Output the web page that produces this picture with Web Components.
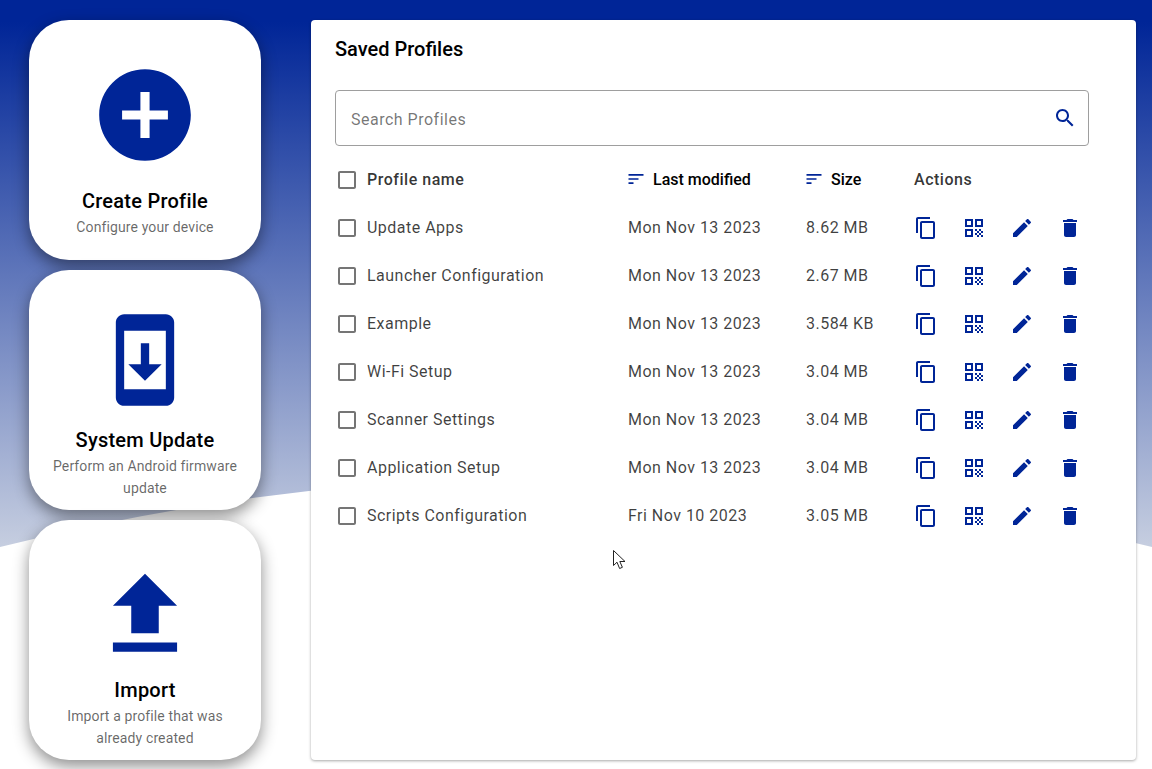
<!DOCTYPE html>
<html lang="en">
<head>
<meta charset="utf-8">
<title>Profiles</title>
<style>
  html, body { margin: 0; height: 100%; overflow: hidden; }
  body { font-family: Roboto, "Liberation Sans", sans-serif; }
</style>
</head>
<body>
<app-shell>
  <action-card slot="side" icon="add_circle" size="110" gap="19">
    <span slot="title">Create Profile</span>
    <span slot="sub">Configure your device</span>
  </action-card>
  <action-card slot="side" icon="system_update" size="100" gap="18">
    <span slot="title">System Update</span>
    <span slot="sub">Perform an Android firmware update</span>
  </action-card>
  <action-card slot="side" icon="file_upload" size="110" gap="8">
    <span slot="title">Import</span>
    <span slot="sub">Import a profile that was already created</span>
  </action-card>

  <profiles-panel>
    <profile-row>Update Apps<span slot="date">Mon Nov 13 2023</span><span slot="size">8.62 MB</span></profile-row>
    <profile-row>Launcher Configuration<span slot="date">Mon Nov 13 2023</span><span slot="size">2.67 MB</span></profile-row>
    <profile-row>Example<span slot="date">Mon Nov 13 2023</span><span slot="size">3.584 KB</span></profile-row>
    <profile-row>Wi-Fi Setup<span slot="date">Mon Nov 13 2023</span><span slot="size">3.04 MB</span></profile-row>
    <profile-row>Scanner Settings<span slot="date">Mon Nov 13 2023</span><span slot="size">3.04 MB</span></profile-row>
    <profile-row>Application Setup<span slot="date">Mon Nov 13 2023</span><span slot="size">3.04 MB</span></profile-row>
    <profile-row>Scripts Configuration<span slot="date">Fri Nov 10 2023</span><span slot="size">3.05 MB</span></profile-row>
  </profiles-panel>
</app-shell>

<script>
const ICONS = {
  add_circle: "M12 2C6.48 2 2 6.48 2 12s4.48 10 10 10 10-4.48 10-10S17.52 2 12 2zm5 11h-4v4h-2v-4H7v-2h4V7h2v4h4v2z",
  system_update: "M17 1.01L7 1c-1.1 0-2 .9-2 2v18c0 1.1.9 2 2 2h10c1.1 0 2-.9 2-2V3c0-1.1-.9-1.99-2-1.99zM17 19H7V5h10v14zm-1-6h-3V8h-2v5H8l4 4 4-4z",
  file_upload: "M9 16h6v-6h4l-7-7-7 7h4zm-4 2h14v2H5z",
  search: "M15.5 14h-.79l-.28-.27C15.41 12.59 16 11.11 16 9.5 16 5.91 13.09 3 9.5 3S3 5.91 3 9.5 5.91 16 9.5 16c1.61 0 3.09-.59 4.23-1.57l.27.28v.79l5 4.99L20.49 19l-4.99-5zm-6 0C7.01 14 5 11.99 5 9.5S7.01 5 9.5 5 14 7.01 14 9.5 11.99 14 9.5 14z",
  sort: "M3 18h6v-2H3v2zM3 6v2h18V6H3zm0 7h12v-2H3v2z",
  checkbox: "M19 5v14H5V5h14m0-2H5c-1.1 0-2 .9-2 2v14c0 1.1.9 2 2 2h14c1.1 0 2-.9 2-2V5c0-1.1-.9-2-2-2z",
  copy: "M16 1H4c-1.1 0-2 .9-2 2v14h2V3h12V1zm3 4H8c-1.1 0-2 .9-2 2v14c0 1.1.9 2 2 2h11c1.1 0 2-.9 2-2V7c0-1.1-.9-2-2-2zm0 16H8V7h11v14z",
  qr: "M3 11h8V3H3v8zm2-6h4v4H5V5zM3 21h8v-8H3v8zm2-6h4v4H5v-4zM13 3v8h8V3h-8zm6 6h-4V5h4v4zM19 19h2v2h-2zM13 13h2v2h-2zM15 15h2v2h-2zM13 17h2v2h-2zM15 19h2v2h-2zM17 17h2v2h-2zM17 13h2v2h-2zM19 15h2v2h-2z",
  edit: "M3 17.25V21h3.75L17.81 9.94l-3.75-3.75L3 17.25zM20.71 7.04c.39-.39.39-1.02 0-1.41l-2.34-2.34c-.39-.39-1.02-.39-1.41 0l-1.83 1.83 3.75 3.75 1.83-1.83z",
  trash: "M6 19c0 1.1.9 2 2 2h8c1.1 0 2-.9 2-2V7H6v12zM19 4h-3.5l-1-1h-5l-1 1H5v2h14V4z"
};

class AppIcon extends HTMLElement {
  constructor() {
    super();
    this.attachShadow({mode: "open"});
  }
  connectedCallback() {
    const size = this.getAttribute("size") || 24;
    const path = ICONS[this.getAttribute("name")];
    this.shadowRoot.innerHTML = `
      <style>
        :host { display: block; width: ${size}px; height: ${size}px; color: var(--icon-color, #002597); flex: none; }
        svg { display: block; width: 100%; height: 100%; fill: currentColor; }
      </style>
      <svg viewBox="0 0 24 24"><path d="${path}"/></svg>`;
  }
}
customElements.define("app-icon", AppIcon);

class AppShell extends HTMLElement {
  constructor() {
    super();
    this.attachShadow({mode: "open"}).innerHTML = `
      <style>
        :host { display: block; position: relative; width: 100%; height: 769px; overflow: hidden; background: #fff; }
        .wave { position: absolute; left: 0; top: 0; width: 100%; height: 100%; }
        .content { position: relative; display: flex; gap: 50px; height: 100%; box-sizing: border-box; padding: 20px 16px 9px 29px; }
        .side { display: flex; flex-direction: column; gap: 10px; width: 232px; flex: none; }
        .cursor { position: absolute; left: 613px; top: 550px; }
      </style>
      <svg class="wave" viewBox="0 0 1152 769" preserveAspectRatio="none">
        <defs>
          <linearGradient id="sky" gradientUnits="userSpaceOnUse" x1="0" y1="0" x2="0" y2="547">
            <stop offset="0" stop-color="#002597"/>
            <stop offset="0.04" stop-color="#002597"/>
            <stop offset="1" stop-color="#c6cee0"/>
          </linearGradient>
        </defs>
        <path d="M0 547 Q576 404 1152 547 V0 H0 Z" fill="url(#sky)"/>
      </svg>
      <div class="content">
        <div class="side"><slot name="side"></slot></div>
        <slot></slot>
      </div>
      <svg class="cursor" width="13" height="20" viewBox="0 0 13 20">
        <path d="M.5.5V15.5L4 12.2 6.6 18.5 9.4 17.3 6.8 11.5H12Z" fill="#fff" stroke="#222" stroke-width="1"/>
      </svg>`;
  }
}
customElements.define("app-shell", AppShell);

class ActionCard extends HTMLElement {
  constructor() {
    super();
    this.attachShadow({mode: "open"});
  }
  connectedCallback() {
    const gap = this.getAttribute("gap") || 18;
    this.shadowRoot.innerHTML = `
      <style>
        :host { display: flex; flex-direction: column; align-items: center; height: 240px; box-sizing: border-box; padding: 40px 16px 0; background: #fff; border-radius: 40px; box-shadow: 0 6px 16px rgba(0,0,0,.45); text-align: center; }
        .title { margin-top: ${gap}px; font-size: 20px; font-weight: 500; line-height: 24px; letter-spacing: .25px; color: #000; }
        .sub { margin-top: 3px; font-size: 14px; line-height: 22px; letter-spacing: .12px; color: rgba(0,0,0,.6); }
      </style>
      <app-icon name="${this.getAttribute("icon")}" size="${this.getAttribute("size")}"></app-icon>
      <div class="title"><slot name="title"></slot></div>
      <div class="sub"><slot name="sub"></slot></div>`;
  }
}
customElements.define("action-card", ActionCard);

class SearchField extends HTMLElement {
  constructor() {
    super();
    this.attachShadow({mode: "open"}).innerHTML = `
      <style>
        :host { display: flex; align-items: center; justify-content: space-between; height: 56px; box-sizing: border-box; padding: 0 11px 0 15px; border: 1px solid #9e9e9e; border-radius: 4px; }
        span { padding-top: 2px; font-size: 16px; letter-spacing: .5px; color: rgba(0,0,0,.55); }
      </style>
      <span>Search Profiles</span>
      <app-icon name="search"></app-icon>`;
  }
}
customElements.define("search-field", SearchField);

const ROW_STYLE = `
  :host { display: grid; grid-template-columns: 32px 261px 178px 108px 1fr; align-items: center; height: 48px; font-size: 16px; letter-spacing: .48px; color: rgba(0,0,0,.75); }
  .check { --icon-color: rgba(0,0,0,.54); }
  .cell { display: flex; align-items: center; white-space: nowrap; padding-bottom: 2px; }
  .actions { display: flex; margin-left: -12px; }
  .actions span { display: flex; justify-content: center; width: 48px; }
`;

class ProfileRow extends HTMLElement {
  constructor() {
    super();
    this.attachShadow({mode: "open"}).innerHTML = `
      <style>${ROW_STYLE}</style>
      <app-icon class="check" name="checkbox"></app-icon>
      <div class="cell"><slot></slot></div>
      <div class="cell"><slot name="date"></slot></div>
      <div class="cell"><slot name="size"></slot></div>
      <div class="actions">
        <span><app-icon name="copy"></app-icon></span>
        <span><app-icon name="qr"></app-icon></span>
        <span><app-icon name="edit"></app-icon></span>
        <span><app-icon name="trash"></app-icon></span>
      </div>`;
  }
}
customElements.define("profile-row", ProfileRow);

class ProfileHead extends HTMLElement {
  constructor() {
    super();
    this.attachShadow({mode: "open"}).innerHTML = `
      <style>
        ${ROW_STYLE}
        :host { font-weight: 500; letter-spacing: 0; color: #000; }
        .plain { color: rgba(0,0,0,.8); letter-spacing: .52px; }
        .sort { margin-left: -2px; margin-right: 7px; }
        .title { padding-bottom: 0; }
      </style>
      <app-icon class="check" name="checkbox"></app-icon>
      <div class="cell plain">Profile name</div>
      <div class="cell"><app-icon class="sort" name="sort" size="20"></app-icon>Last modified</div>
      <div class="cell"><app-icon class="sort" name="sort" size="20"></app-icon>Size</div>
      <div class="cell plain">Actions</div>`;
  }
}
customElements.define("profile-head", ProfileHead);

class ProfilesPanel extends HTMLElement {
  constructor() {
    super();
    this.attachShadow({mode: "open"}).innerHTML = `
      <style>
        :host { display: block; width: 825px; flex: none; box-sizing: border-box; padding: 16px 47px 0 24px; background: #fff; border-radius: 4px; box-shadow: 0 1px 3px rgba(0,0,0,.35); }
        h2 { margin: 0 0 28px; font-size: 20px; font-weight: 500; line-height: 26px; letter-spacing: 0; color: #000; }
        profile-head { margin-top: 10px; }
      </style>
      <h2>Saved Profiles</h2>
      <search-field></search-field>
      <profile-head></profile-head>
      <slot></slot>`;
  }
}
customElements.define("profiles-panel", ProfilesPanel);
</script>
</body>
</html>
